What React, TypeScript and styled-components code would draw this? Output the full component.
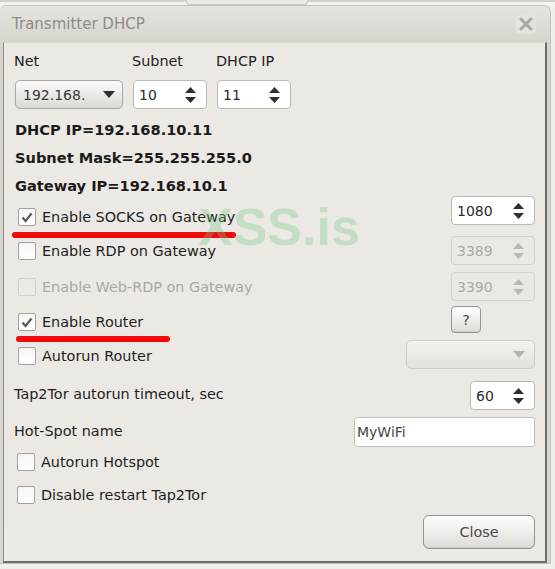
import React from "react";
import styled, { createGlobalStyle, css } from "styled-components";

const Global = createGlobalStyle`
  html, body { margin: 0; padding: 0; background: #f1f0ed; }
  body { font-family: "DejaVu Sans", "Liberation Sans", sans-serif; }
`;

const TopStrip = styled.div`
  height: 5px;
  position: relative;
  border-top: 2px solid #d2d1cd;
  box-sizing: border-box;
  background: #f4f3f0;
`;

const TabHint = styled.div`
  position: absolute;
  left: 186px;
  top: -2px;
  width: 120px;
  height: 4px;
  border: 1px solid #c9c8c4;
  border-top: none;
  border-radius: 0 0 4px 4px;
  background: #eceae6;
`;

const Window = styled.div`
  width: 551px;
  height: 559px;
  box-sizing: border-box;
  border-radius: 6px 7px 0 0;
  border: 1px solid #c4c2bc;
  border-left: none;
  background: linear-gradient(#e6e4df, #d6d3cc 40px, #d9d6d0);
  display: flex;
  flex-direction: column;
  position: relative;
`;

const TitleBar = styled.div`
  height: 36px;
  display: flex;
  align-items: center;
  justify-content: space-between;
  padding: 0 14px 0 12px;
`;

const Title = styled.span`
  font-size: 15px;
  color: #8b8b89;
`;

const CloseX = styled.div`
  width: 20px;
  height: 20px;
  border-radius: 4px;
  background: #e4e3df;
  display: flex;
  align-items: center;
  justify-content: center;
`;

const Panel = styled.div`
  margin: 0 3px 0 3px;
  flex: 1;
  background: #ece9e4;
  border-top: 1px solid #d9d7d1;
  border-left: 1px solid #8c8b88;
  border-right: 2px solid #6e6d6a;
  border-bottom: 2px solid #6e6d6a;
  padding: 0 10px 12px 10px;
  display: flex;
  flex-direction: column;
  position: relative;
  font-size: 14.4px;
  color: #1e1e1e;
`;

const NetGrid = styled.div`
  display: grid;
  grid-template-columns: 108px 74px 74px;
  column-gap: 10px;
  margin-left: 1px;
  margin-top: 9px;
`;

const FieldLabel = styled.div`
  height: 18px;
  line-height: 18px;
  margin-left: -1px;
  margin-bottom: 10px;
`;

const Combo = styled.div<{ $disabled?: boolean }>`
  box-sizing: border-box;
  height: 29px;
  border: 1px solid ${(p) => (p.$disabled ? "#cdcbc6" : "#a9a8a4")};
  border-radius: 5px;
  background: ${(p) =>
    p.$disabled
      ? "linear-gradient(#f3f2ef, #e3e1dc)"
      : "linear-gradient(#fbfbfa, #e9e8e4 55%, #dcdad5)"};
  display: flex;
  align-items: center;
  justify-content: space-between;
  padding: 0 7px 0 7px;
  color: #3a3a3a;
  font-size: 14px;
  ${(p) =>
    p.$disabled &&
    css`
      width: 129px;
      padding-right: 9px;
    `}
`;

const Spin = styled.div<{ $disabled?: boolean; $w?: number }>`
  box-sizing: border-box;
  height: 29px;
  width: ${(p) => (p.$w ? `${p.$w}px` : "auto")};
  border: 1px solid ${(p) => (p.$disabled ? "#d4d2cd" : "#b9b8b4")};
  border-radius: 4px;
  background: ${(p) => (p.$disabled ? "#ebe9e4" : "#ffffff")};
  color: ${(p) => (p.$disabled ? "#a9a9a7" : "#2a2a2a")};
  display: flex;
  align-items: center;
  justify-content: space-between;
  padding: 0 10px 0 5px;
  font-size: 14px;
`;

const Arrows = styled.div`
  display: flex;
  flex-direction: column;
  gap: 4px;
`;

const Info = styled.div`
  margin-top: 11px;
  display: flex;
  flex-direction: column;
  gap: 8px;
  font-weight: bold;
  font-size: 14.6px;
  line-height: 20px;
  margin-left: 1px;
  color: #1b1b1b;
`;

const Row = styled.div<{ $h: number }>`
  height: ${(p) => p.$h}px;
  display: flex;
  justify-content: space-between;
  align-items: flex-start;
  position: relative;
`;

const Left = styled.div<{ $pt: number }>`
  padding-top: ${(p) => p.$pt}px;
`;

const CheckLine = styled.label<{ $disabled?: boolean; $ml?: number }>`
  display: flex;
  align-items: center;
  gap: 6px;
  height: 18px;
  margin-left: ${(p) => (p.$ml ?? 4)}px;
  color: ${(p) => (p.$disabled ? "#a7a7a5" : "#1e1e1e")};
`;

const Box = styled.span<{ $disabled?: boolean }>`
  box-sizing: border-box;
  width: 18px;
  height: 18px;
  border: 1px solid ${(p) => (p.$disabled ? "#d2d0cb" : "#a3a29e")};
  border-radius: 2px;
  background: ${(p) =>
    p.$disabled ? "#eceae6" : "linear-gradient(#f6f6f5, #ffffff)"};
  display: flex;
  align-items: center;
  justify-content: center;
`;

const PlainLabel = styled.div`
  height: 18px;
  line-height: 18px;
`;

const HelpSlot = styled.div`
  width: 84px;
  display: flex;
`;

const Button = styled.div<{ $w: number; $h: number }>`
  box-sizing: border-box;
  width: ${(p) => p.$w}px;
  height: ${(p) => p.$h}px;
  border: 1px solid #939290;
  border-radius: ${(p) => (p.$h > 30 ? 6 : 4)}px;
  background: linear-gradient(#fdfdfc, #efeeeb 50%, #dddbd6);
  box-shadow: inset 0 -1px 0 #cfcdc8;
  display: flex;
  align-items: center;
  justify-content: center;
  color: #4a4a4a;
  font-size: 14.4px;
`;

const TextInput = styled.div`
  box-sizing: border-box;
  width: 181px;
  height: 30px;
  border: 1px solid #c0bfbb;
  border-radius: 3px;
  background: #ffffff;
  display: flex;
  align-items: center;
  padding-left: 2px;
  font-size: 14px;
  color: #444;
`;

const Spacer = styled.div<{ $h: number }>`
  height: ${(p) => p.$h}px;
  flex: none;
`;

const Footer = styled.div`
  display: flex;
  justify-content: flex-end;
  margin-top: 11px;
`;

const RedMark = styled.div<{ $top: number; $left: number; $w: number }>`
  position: absolute;
  top: ${(p) => p.$top}px;
  left: ${(p) => p.$left}px;
  width: ${(p) => p.$w}px;
  height: 6px;
  border-radius: 3px;
  background: #f00a0a;
`;

const Watermark = styled.div`
  position: absolute;
  left: 194px;
  top: 158px;
  font-family: "Liberation Sans", Arial, sans-serif;
  font-weight: bold;
  font-size: 52px;
  line-height: 1;
  color: rgba(110, 200, 130, 0.32);
  pointer-events: none;
`;

const UpDown = ({ disabled }: { disabled?: boolean }) => {
  const c = disabled ? "#b8b7b4" : "#2e2e2e";
  return (
    <Arrows>
      <svg width="11" height="6" viewBox="0 0 11 6">
        <polygon points="0,6 5.5,0 11,6" fill={c} />
      </svg>
      <svg width="11" height="6" viewBox="0 0 11 6">
        <polygon points="0,0 11,0 5.5,6" fill={c} />
      </svg>
    </Arrows>
  );
};

const Down = ({ color }: { color: string }) => (
  <svg width="12" height="7" viewBox="0 0 12 7">
    <polygon points="0,0 12,0 6,7" fill={color} />
  </svg>
);

const Check = ({ checked, disabled, label, ml }: { checked?: boolean; disabled?: boolean; label: string; ml?: number }) => (
  <CheckLine $disabled={disabled} $ml={ml}>
    <Box $disabled={disabled}>
      {checked && (
        <svg width="12" height="11" viewBox="0 0 12 11">
          <polyline points="1.5,5.5 4.5,9 10.5,1.5" fill="none" stroke="#5a5a5a" strokeWidth="2.2" />
        </svg>
      )}
    </Box>
    {label}
  </CheckLine>
);

const SpinBox = ({ value, disabled, w }: { value: string; disabled?: boolean; w?: number }) => (
  <Spin $disabled={disabled} $w={w}>
    <span>{value}</span>
    <UpDown disabled={disabled} />
  </Spin>
);

export default function App() {
  return (
    <>
      <Global />
      <TopStrip>
        <TabHint />
      </TopStrip>
      <Window>
        <TitleBar>
          <Title>Transmitter DHCP</Title>
          <CloseX>
            <svg width="14" height="14" viewBox="0 0 14 14">
              <path d="M2 2 L12 12 M12 2 L2 12" stroke="#a9a8a5" strokeWidth="3" strokeLinecap="round" />
            </svg>
          </CloseX>
        </TitleBar>
        <Panel>
          <NetGrid>
            <FieldLabel>Net</FieldLabel>
            <FieldLabel>Subnet</FieldLabel>
            <FieldLabel>DHCP IP</FieldLabel>
            <Combo>
              <span>192.168.</span>
              <Down color="#2e2e2e" />
            </Combo>
            <SpinBox value="10" />
            <SpinBox value="11" />
          </NetGrid>
          <Info>
            <div>DHCP IP=192.168.10.11</div>
            <div>Subnet Mask=255.255.255.0</div>
            <div>Gateway IP=192.168.10.1</div>
          </Info>
          <Row $h={40}>
            <Left $pt={12}>
              <Check checked label="Enable SOCKS on Gateway" />
            </Left>
            <SpinBox value="1080" w={84} />
            <RedMark $top={36} $left={-2} $w={224} />
          </Row>
          <Row $h={36}>
            <Left $pt={6}>
              <Check label="Enable RDP on Gateway" />
            </Left>
            <SpinBox value="3389" disabled w={84} />
          </Row>
          <Row $h={34}>
            <Left $pt={6}>
              <Check disabled label="Enable Web-RDP on Gateway" />
            </Left>
            <SpinBox value="3390" disabled w={84} />
          </Row>
          <Row $h={34}>
            <Left $pt={7}>
              <Check checked label="Enable Router" />
            </Left>
            <HelpSlot>
              <Button $w={30} $h={27}>?</Button>
            </HelpSlot>
            <RedMark $top={30} $left={2} $w={154} />
          </Row>
          <Row $h={41}>
            <Left $pt={7}>
              <Check label="Autorun Router" />
            </Left>
            <Combo $disabled>
              <span />
              <Down color="#b3b2af" />
            </Combo>
          </Row>
          <Row $h={36}>
            <Left $pt={4}>
              <PlainLabel>Tap2Tor autorun timeout, sec</PlainLabel>
            </Left>
            <SpinBox value="60" w={65} />
          </Row>
          <Row $h={30}>
            <Left $pt={5}>
              <PlainLabel>Hot-Spot name</PlainLabel>
            </Left>
            <TextInput>MyWiFi</TextInput>
          </Row>
          <Spacer $h={6} />
          <Check label="Autorun Hotspot" ml={3} />
          <Spacer $h={15} />
          <Check label="Disable restart Tap2Tor" ml={3} />
          <Footer>
            <Button $w={112} $h={34}>Close</Button>
          </Footer>
          <Watermark>XSS.is</Watermark>
        </Panel>
      </Window>
    </>
  );
}
